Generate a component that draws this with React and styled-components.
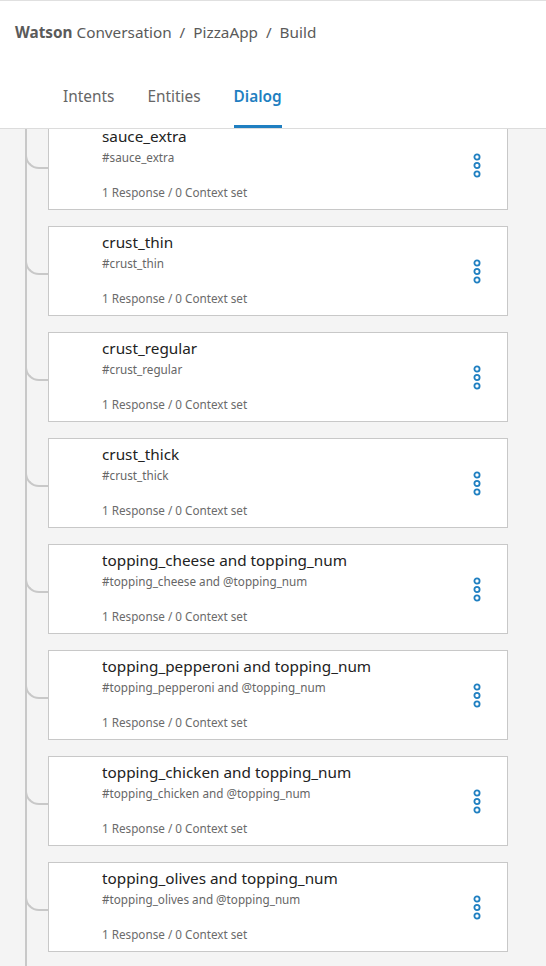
import styled, { createGlobalStyle } from 'styled-components';

// Estilos globais
const GlobalStyle = createGlobalStyle`
  body {
    margin: 0;
    background: #f4f4f4;
    font-family: "Noto Sans", "Open Sans", sans-serif;
  }
`;

const Page = styled.div`
  width: 546px;
  height: 966px;
  overflow: hidden;
  display: flex;
  flex-direction: column;
`;

// Cabeçalho com breadcrumb e abas
const Header = styled.header`
  box-sizing: border-box;
  height: 129px;
  flex-shrink: 0;
  background: #fff;
  border-top: 1px solid #e0e0e0;
  border-bottom: 1px solid #dcdcdc;
  display: flex;
  flex-direction: column;
`;

const Breadcrumb = styled.div`
  padding: 20px 0 0 15px;
  line-height: 22px;
  font-size: 15.3px;
  color: #5a5a5a;

  b {
    font-weight: 700;
  }
`;

const Tabs = styled.nav`
  margin-top: auto;
  display: flex;
  gap: 33px;
  padding-left: 63px;
`;

const Tab = styled.span`
  font-size: 15.4px;
  line-height: 22px;
  padding-bottom: 17px;
  color: ${(p) => (p.$active ? '#1f7fc1' : '#666')};
  font-weight: ${(p) => (p.$active ? 600 : 400)};
  border-bottom: 3px solid ${(p) => (p.$active ? '#1f7fc1' : 'transparent')};
`;

// Área da árvore de diálogo
const Main = styled.main`
  flex: 1;
  overflow: hidden;
`;

const Tree = styled.div`
  margin: -9px 0 0 25px;
  border-left: 2px solid #c8c8c8;
  padding-left: 21px;
  display: flex;
  flex-direction: column;
  gap: 16px;
  min-height: 900px;
`;

const Card = styled.div`
  position: relative;
  box-sizing: border-box;
  width: 460px;
  height: 90px;
  background: #fff;
  border: 1px solid #c8c8c8;
  display: flex;
  align-items: center;

  &::before {
    content: '';
    position: absolute;
    left: -24px;
    top: 30px;
    width: 22px;
    height: 16px;
    border-left: 2px solid #c8c8c8;
    border-bottom: 2px solid #c8c8c8;
    border-bottom-left-radius: 14px;
  }
`;

const Body = styled.div`
  flex: 1;
  align-self: stretch;
  display: flex;
  flex-direction: column;
  padding: 5px 0 9px 53px;
`;

const Title = styled.div`
  font-size: 15.3px;
  line-height: 20px;
  color: #222;
`;

const Condition = styled.div`
  margin-top: 3px;
  font-size: 11.7px;
  line-height: 16px;
  color: #666;
`;

const Meta = styled.div`
  margin-top: auto;
  font-size: 11.7px;
  line-height: 16px;
  color: #6b6b6b;
`;

const MenuButton = styled.button`
  border: 0;
  background: none;
  padding: 0;
  margin: 2px 26px 0 0;
  display: flex;
  cursor: pointer;
`;

const nodes = [
  ['sauce_extra', '#sauce_extra'],
  ['crust_thin', '#crust_thin'],
  ['crust_regular', '#crust_regular'],
  ['crust_thick', '#crust_thick'],
  ['topping_cheese and topping_num', '#topping_cheese and @topping_num'],
  ['topping_pepperoni and topping_num', '#topping_pepperoni and @topping_num'],
  ['topping_chicken and topping_num', '#topping_chicken and @topping_num'],
  ['topping_olives and topping_num', '#topping_olives and @topping_num'],
];

function DotsIcon() {
  return (
    <svg width="8" height="26" viewBox="0 0 8 26">
      {[4, 12.5, 21].map((cy) => (
        <circle key={cy} cx="4" cy={cy} r="2.6" fill="none" stroke="#1f7fc1" strokeWidth="1.8" />
      ))}
    </svg>
  );
}

export default function App() {
  return (
    <Page>
      <GlobalStyle />
      <Header>
        <Breadcrumb>
          <b>Watson</b> Conversation&nbsp; / &nbsp;PizzaApp&nbsp; / &nbsp;Build
        </Breadcrumb>
        <Tabs>
          <Tab>Intents</Tab>
          <Tab>Entities</Tab>
          <Tab $active>Dialog</Tab>
        </Tabs>
      </Header>
      <Main>
        <Tree>
          {nodes.map(([title, cond]) => (
            <Card key={title}>
              <Body>
                <Title>{title}</Title>
                <Condition>{cond}</Condition>
                <Meta>1 Response / 0 Context set</Meta>
              </Body>
              <MenuButton aria-label="Opções">
                <DotsIcon />
              </MenuButton>
            </Card>
          ))}
        </Tree>
      </Main>
    </Page>
  );
}
